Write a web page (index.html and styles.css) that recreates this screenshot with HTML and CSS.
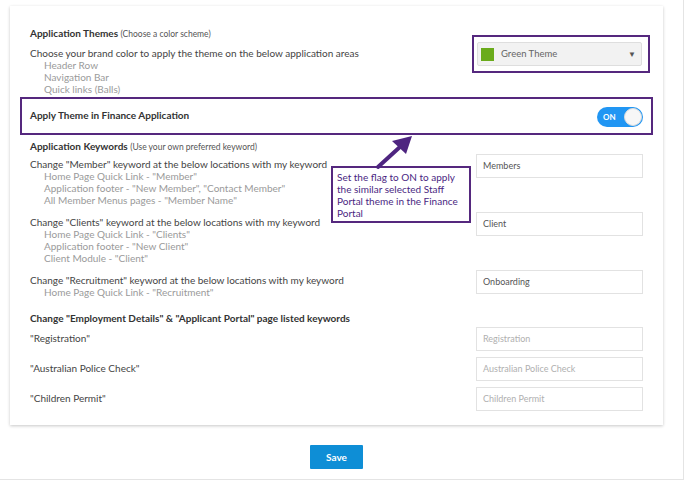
FILE: index.html
```html
<!DOCTYPE html>
<html>
<head>
<meta charset="utf-8">
<link rel="stylesheet" href="styles.css">
</head>
<body>
<div class="frame">
  <div class="card">
    <section class="row theme-row">
      <div class="left">
        <div class="heading">Application Themes <span class="hint">(Choose a color scheme)</span></div>
        <div class="label first">Choose your brand color to apply the theme on the below application areas</div>
        <ul class="subs">
          <li>Header Row</li>
          <li>Navigation Bar</li>
          <li>Quick links (Balls)</li>
        </ul>
      </div>
      <div class="highlight select-box">
        <div class="select">
          <span class="swatch"></span>
          <span class="select-text">Green Theme</span>
          <span class="caret">&#9660;</span>
        </div>
      </div>
    </section>

    <section class="highlight finance">
      <div class="heading finance-title">Apply Theme in Finance Application</div>
      <div class="toggle"><span class="toggle-label">ON</span><span class="knob"></span></div>
    </section>

    <div class="heading kw-heading">Application Keywords <span class="hint">(Use your own preferred keyword)</span></div>

    <section class="row kw-row">
      <div class="left">
        <div class="label">Change "Member" keyword at the below locations with my keyword</div>
        <ul class="subs">
          <li>Home Page Quick Link - "Member"</li>
          <li>Application footer - "New Member", "Contact Member"</li>
          <li>All Member Menus pages - "Member Name"</li>
        </ul>
      </div>
      <div class="input value">Members</div>
    </section>

    <section class="row kw-row">
      <div class="left">
        <div class="label">Change "Clients" keyword at the below locations with my keyword</div>
        <ul class="subs">
          <li>Home Page Quick Link - "Clients"</li>
          <li>Application footer - "New Client"</li>
          <li>Client Module - "Client"</li>
        </ul>
      </div>
      <div class="input value">Client</div>
    </section>

    <section class="row kw-row">
      <div class="left">
        <div class="label">Change "Recruitment" keyword at the below locations with my keyword</div>
        <ul class="subs">
          <li>Home Page Quick Link - "Recruitment"</li>
        </ul>
      </div>
      <div class="input value">Onboarding</div>
    </section>

    <div class="heading emp-heading">Change "Employment Details" &amp; "Applicant Portal" page listed keywords</div>

    <section class="row simple-row first-simple">
      <div class="label">"Registration"</div>
      <div class="input placeholder">Registration</div>
    </section>
    <section class="row simple-row">
      <div class="label">"Australian Police Check"</div>
      <div class="input placeholder">Australian Police Check</div>
    </section>
    <section class="row simple-row">
      <div class="label">"Children Permit"</div>
      <div class="input placeholder">Children Permit</div>
    </section>

    <div class="callout">Set the flag to ON to apply the similar selected Staff Portal theme in the Finance Portal</div>
    <svg class="arrow" width="40" height="36" viewBox="0 0 40 36">
      <path d="M3 33 L26 12" stroke="#4e2580" stroke-width="4" stroke-linecap="round" fill="none"/>
      <polygon points="37,2 17,7 31,20" fill="#4e2580"/>
    </svg>
  </div>
  <div class="actions">
    <button class="save">Save</button>
  </div>
</div>
</body>
</html>
```

FILE: styles.css
```css
* { box-sizing: border-box; }
body {
  margin: 0;
  background: #fff;
  font-family: Lato, "Open Sans", sans-serif;
  font-size: 10px;
  line-height: 12px;
  color: #444;
}
.frame {
  width: 684px;
  height: 480px;
  border-right: 1px solid #e4e4e4;
  border-bottom: 1px solid #e4e4e4;
  padding: 6px 0 0 10px;
}
.card {
  position: relative;
  width: 653px;
  height: 419px;
  padding: 21px 10px 0 10px;
  background: #fff;
  box-shadow: 0 1px 3px rgba(0,0,0,0.22);
}
.row {
  display: flex;
  justify-content: space-between;
  align-items: flex-start;
  padding: 0 10px;
}
.left { display: flex; flex-direction: column; }
.heading {
  font-weight: bold;
  color: #333;
  font-size: 10px;
}
.hint {
  font-weight: normal;
  font-size: 8.5px;
  color: #555;
}
.label { color: #444; }
.label.first { margin-top: 7px; }
.subs {
  list-style: none;
  margin: 0;
  padding: 0 0 0 14px;
  color: #9a9a9a;
}
.highlight { border: 2px solid #55287e; }
.select-box {
  width: 178px;
  height: 38px;
  margin: 8px -7px 0 0;
  padding: 5px 6px 5px 3px;
}
.select {
  display: flex;
  align-items: center;
  height: 24px;
  background: #f2f2f2;
  border: 1px solid #dedede;
  border-radius: 2px;
  padding: 0 5px 0 3px;
}
.swatch {
  width: 13px;
  height: 13px;
  background: #6aab1b;
}
.select-text {
  flex: 1;
  margin-left: 7px;
  font-size: 9.5px;
  color: #666;
}
.caret { font-size: 8px; color: #555; }
.finance {
  display: flex;
  justify-content: space-between;
  align-items: center;
  height: 38px;
  margin-top: 2px;
  padding: 0 8px 0 8px;
}
.finance-title { margin-top: -3px; }
.toggle {
  position: relative;
  width: 46px;
  height: 20px;
  margin-top: 2px;
  border-radius: 10px;
  background: #2196f3;
  display: flex;
  align-items: center;
}
.toggle-label {
  margin-left: 6px;
  font-size: 8px;
  font-weight: bold;
  color: #fff;
}
.knob {
  position: absolute;
  right: 1px;
  top: 1px;
  width: 18px;
  height: 18px;
  border-radius: 50%;
  background: #f7f7f7;
  border: 1px solid #dcdcdc;
}
.kw-heading { margin: 5px 10px 0; }
.kw-row { margin-top: 1px; }
.kw-row + .kw-row { margin-top: 6px; }
.kw-row .left { padding-top: 4px; }
.input {
  flex: none;
  width: 167px;
  height: 24px;
  border: 1px solid #e2e2e2;
  padding: 0 6px;
  display: flex;
  align-items: center;
  font-size: 9px;
}
.input.value { color: #555; }
.input.placeholder { color: #b0b0b0; }
.emp-heading { margin: 14px 10px 0; }
.simple-row { margin-top: 6px; }
.simple-row .label { padding-top: 5px; }
.simple-row.first-simple { margin-top: 3px; }
.callout {
  position: absolute;
  left: 321px;
  top: 160px;
  width: 140px;
  height: 57px;
  padding: 3px 4px;
  border: 2px solid #55287e;
  background: #fff;
  color: #4a1f82;
}
.arrow {
  position: absolute;
  left: 365px;
  top: 128px;
}
.actions {
  display: flex;
  justify-content: center;
  width: 653px;
  margin-top: 20px;
}
.save {
  width: 53px;
  height: 24px;
  border: none;
  border-radius: 1px;
  background: #0e8ed6;
  color: #fff;
  font-family: Lato, sans-serif;
  font-weight: bold;
  font-size: 10px;
}
```
